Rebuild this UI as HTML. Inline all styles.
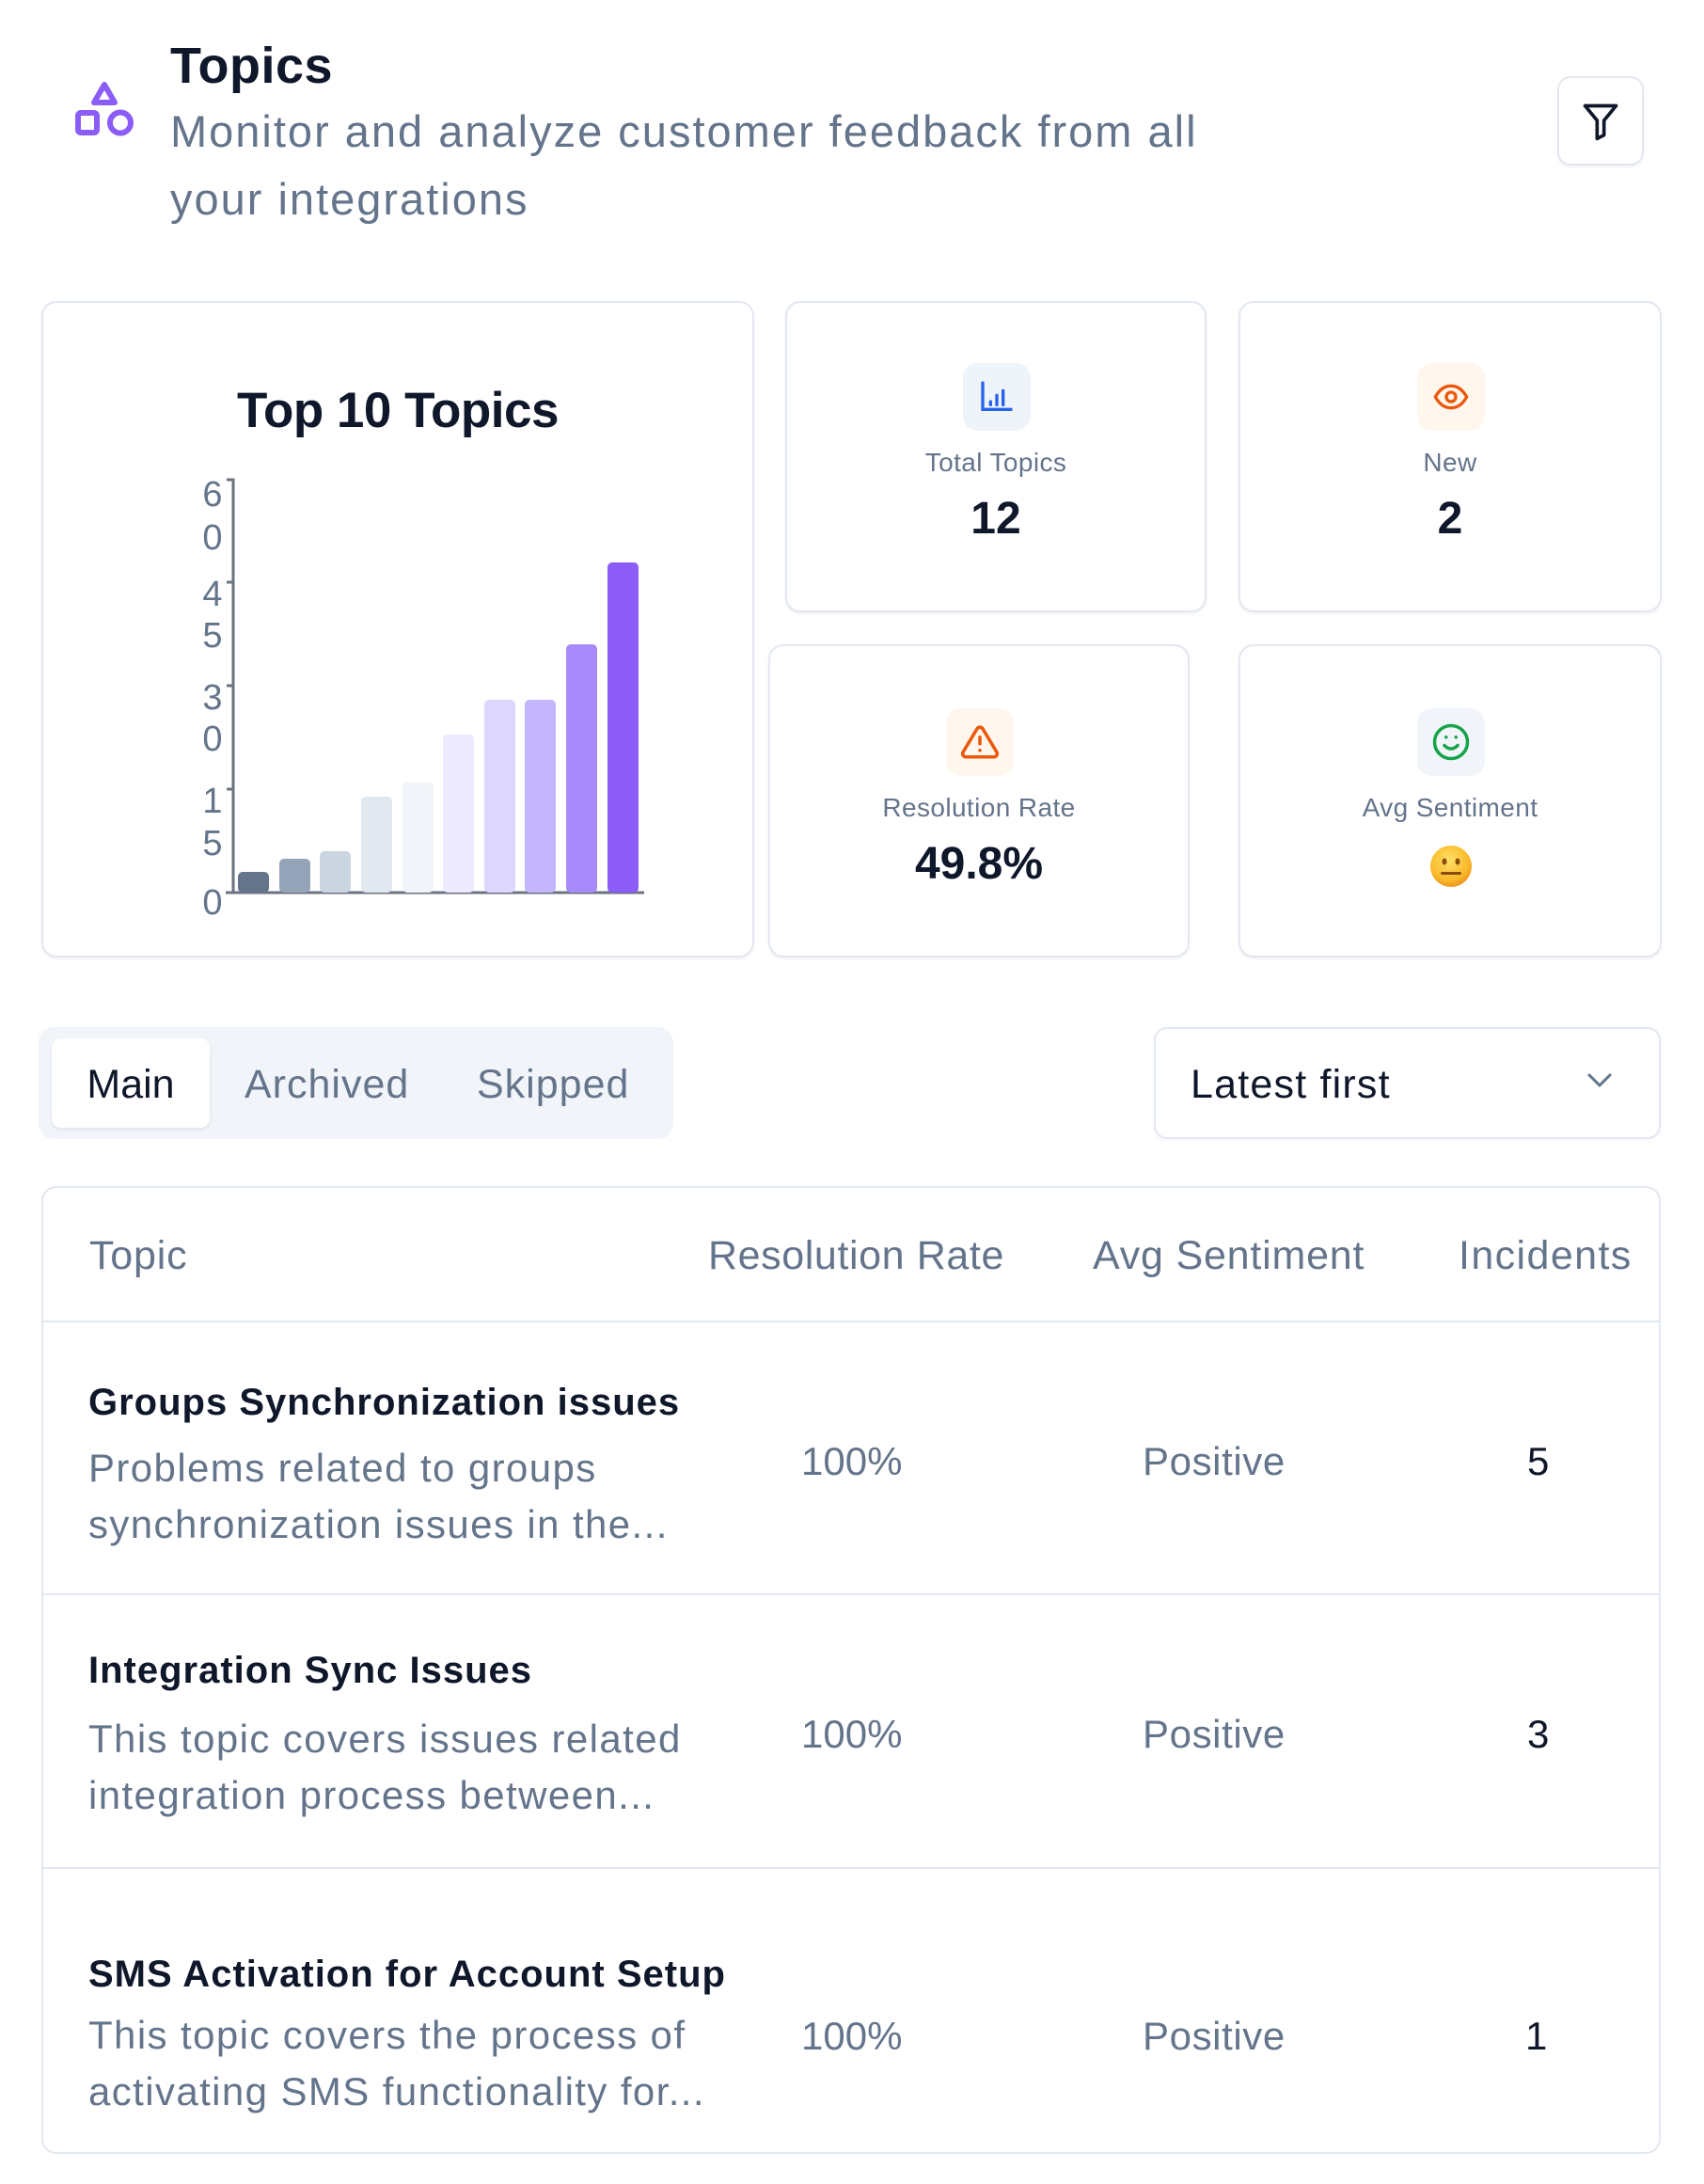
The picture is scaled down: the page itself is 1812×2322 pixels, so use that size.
<!DOCTYPE html>
<html><head><meta charset="utf-8"><style>
*{margin:0;padding:0;box-sizing:border-box}
body{width:1812px;height:2322px;background:#fff;position:relative;overflow:hidden;font-family:"Liberation Sans",sans-serif;color:#0f172a}
.a{position:absolute;white-space:nowrap}
.card{position:absolute;border:2px solid #e2e8f0;border-radius:16px;background:#fff;box-shadow:0 2px 3px rgba(15,23,42,.05)}
.ib{position:absolute;width:72px;height:72px;border-radius:16px;display:flex;align-items:center;justify-content:center}
.lbl{position:absolute;width:100%;text-align:center;font-size:28px;color:#64748b;letter-spacing:.4px}
.val{position:absolute;width:100%;text-align:center;font-size:48px;font-weight:bold;color:#0f172a}
.g{color:#64748b}
.hline{position:absolute;left:44px;width:1722px;height:2px;background:#e2e8f0}
.d{letter-spacing:1.4px}
.t{letter-spacing:1px}
</style></head><body>

<svg class="a" style="left:78px;top:84px" width="66" height="64" viewBox="0 0 66 64" fill="none" stroke="#8b5cf6" stroke-width="6" stroke-linejoin="round">
<path d="M33 6 L22 25 H44 Z"/>
<rect x="5" y="36" width="20" height="21" rx="3"/>
<circle cx="50" cy="46.5" r="11"/>
</svg>
<div class="a" style="left:181px;top:40px;font-size:54px;font-weight:bold;line-height:60px;letter-spacing:.5px">Topics</div>
<div class="a g" style="left:181px;top:104px;font-size:47px;line-height:72px;letter-spacing:2px">Monitor and analyze customer feedback from all<br>your integrations</div>

<div class="a" style="left:1656px;top:81px;width:92px;height:95px;border:2px solid #e2e8f0;border-radius:14px;box-shadow:0 2px 3px rgba(0,0,0,.05)"></div>
<svg class="a" style="left:1680px;top:106px" width="44" height="46" viewBox="0 0 24 24" fill="none" stroke="#0f172a" stroke-width="2" stroke-linejoin="round" stroke-linecap="round"><path d="M3 3h18l-7 8.5V20l-4 2v-10.5Z"/></svg>

<div class="card" style="left:44px;top:320px;width:758px;height:698px"></div>
<div class="a" style="left:44px;width:758px;text-align:center;top:405px;font-size:53px;font-weight:bold;line-height:64px;letter-spacing:-.5px">Top 10 Topics</div>
<svg class="a" style="left:200px;top:500px" width="500" height="490" viewBox="200 500 500 490">
<g fill="#64748b" font-family="Liberation Sans" font-size="38" text-anchor="middle">
<text x="226" y="538">6</text><text x="226" y="584">0</text>
<text x="226" y="644">4</text><text x="226" y="688">5</text>
<text x="226" y="754">3</text><text x="226" y="798">0</text>
<text x="226" y="864">1</text><text x="226" y="909">5</text>
<text x="226" y="972">0</text>
</g>
<g stroke="#6b7280" stroke-width="3" fill="none">
<path d="M241 510H248V949M241 619H248M241 729H248M241 839H248M240 949H685"/>
</g>
<g>
<rect x="253" y="927" width="33" height="22" rx="5" fill="#64748b"/>
<rect x="297" y="913" width="33" height="36" rx="5" fill="#94a3b8"/>
<rect x="340" y="905" width="33" height="44" rx="5" fill="#cbd5e1"/>
<rect x="384" y="847" width="33" height="102" rx="5" fill="#e2e8f0"/>
<rect x="428" y="832" width="33" height="117" rx="5" fill="#f1f5f9"/>
<rect x="471" y="781" width="33" height="168" rx="5" fill="#ede9fe"/>
<rect x="515" y="744" width="33" height="205" rx="5" fill="#ddd6fe"/>
<rect x="558" y="744" width="33" height="205" rx="5" fill="#c4b5fd"/>
<rect x="602" y="685" width="33" height="264" rx="5" fill="#a78bfa"/>
<rect x="646" y="598" width="33" height="351" rx="5" fill="#8b5cf6"/>
</g>
</svg>

<div class="card" style="left:835px;top:320px;width:448px;height:331px">
 <div class="ib" style="left:187px;top:64px;background:#eff4fa">
  <svg width="40" height="40" viewBox="0 0 24 24" fill="none" stroke="#2563eb" stroke-width="2" stroke-linecap="round"><path d="M3 3v17h18M8 15v2M12 11v6M16 8v9"/></svg></div>
 <div class="lbl" style="top:154px">Total Topics</div>
 <div class="val" style="top:202px">12</div>
</div>
<div class="card" style="left:1317px;top:320px;width:450px;height:331px">
 <div class="ib" style="left:188px;top:64px;background:#fff6ed">
  <svg width="40" height="40" viewBox="0 0 24 24" fill="none" stroke="#ea580c" stroke-width="2"><path d="M2 12c2.5-4.5 6-7 10-7s7.5 2.5 10 7c-2.5 4.5-6 7-10 7s-7.5-2.5-10-7Z"/><circle cx="12" cy="12" r="3"/></svg></div>
 <div class="lbl" style="top:154px">New</div>
 <div class="val" style="top:202px">2</div>
</div>
<div class="card" style="left:817px;top:685px;width:448px;height:333px">
 <div class="ib" style="left:187px;top:66px;background:#fff6ed">
  <svg width="42" height="42" viewBox="0 0 24 24" fill="none" stroke="#ea580c" stroke-width="2" stroke-linejoin="round" stroke-linecap="round"><path d="M10.3 3.9 1.8 18a2 2 0 0 0 1.7 3h17a2 2 0 0 0 1.7-3L13.7 3.9a2 2 0 0 0-3.4 0Z"/><path d="M12 9v4M12 17h.01"/></svg></div>
 <div class="lbl" style="top:156px">Resolution Rate</div>
 <div class="val" style="top:204px">49.8%</div>
</div>
<div class="card" style="left:1317px;top:685px;width:450px;height:333px">
 <div class="ib" style="left:188px;top:66px;background:#f1f5f9">
  <svg width="42" height="42" viewBox="0 0 24 24" fill="none" stroke="#16a34a" stroke-width="2" stroke-linecap="round"><circle cx="12" cy="12" r="10"/><path d="M8 14s1.5 2 4 2 4-2 4-2M9 9h.01M15 9h.01"/></svg></div>
 <div class="lbl" style="top:156px">Avg Sentiment</div>
 <svg class="a" style="left:201px;top:211px" width="46" height="46" viewBox="0 0 46 46"><defs><radialGradient id="e" cx=".45" cy=".35" r=".7"><stop offset="0" stop-color="#ffe066"/><stop offset=".7" stop-color="#f9b829"/><stop offset="1" stop-color="#ec8a1c"/></radialGradient></defs><circle cx="23" cy="23" r="22" fill="url(#e)"/><ellipse cx="16" cy="18" rx="2.5" ry="3.5" fill="#8a4a10"/><ellipse cx="30" cy="18" rx="2.5" ry="3.5" fill="#8a4a10"/><rect x="12" y="29" width="22" height="3" rx="1.5" fill="#8a4a10"/></svg>
</div>

<div class="a" style="left:41px;top:1092px;width:675px;height:119px;background:#f1f5f9;border-radius:16px"></div>
<div class="a" style="left:55px;top:1104px;width:168px;height:95px;background:#fff;border-radius:10px;box-shadow:0 2px 4px rgba(15,23,42,.08)"></div>
<div class="a" style="left:55px;width:168px;text-align:center;top:1128px;font-size:43px;line-height:50px">Main</div>
<div class="a g" style="left:260px;top:1128px;font-size:43px;line-height:50px;letter-spacing:1px">Archived</div>
<div class="a g" style="left:507px;top:1128px;font-size:43px;line-height:50px;letter-spacing:1px">Skipped</div>

<div class="a" style="left:1227px;top:1092px;width:539px;height:119px;border:2px solid #e2e8f0;border-radius:14px;box-shadow:0 2px 3px rgba(0,0,0,.04)"></div>
<div class="a" style="left:1266px;top:1128px;font-size:43px;line-height:50px;letter-spacing:1.2px">Latest first</div>
<svg class="a" style="left:1686px;top:1138px" width="30" height="20" viewBox="0 0 30 20" fill="none" stroke="#64748b" stroke-width="3" stroke-linecap="round" stroke-linejoin="round"><path d="M4 5l11 11L26 5"/></svg>

<div class="card" style="left:44px;top:1261px;width:1722px;height:1029px;box-shadow:none"></div>
<div class="hline" style="top:1404px"></div>
<div class="hline" style="top:1694px"></div>
<div class="hline" style="top:1985px"></div>
<div class="a g" style="left:95px;top:1310px;font-size:43px;line-height:50px;letter-spacing:.8px">Topic</div>
<div class="a g" style="left:753px;top:1310px;font-size:43px;line-height:50px;letter-spacing:.6px">Resolution Rate</div>
<div class="a g" style="left:1162px;top:1310px;font-size:43px;line-height:50px;letter-spacing:.8px">Avg Sentiment</div>
<div class="a g" style="left:1551px;top:1310px;font-size:43px;line-height:50px;letter-spacing:1.4px">Incidents</div>

<div class="a t" style="left:94px;top:1468px;font-size:40px;font-weight:bold;line-height:46px">Groups Synchronization issues</div>
<div class="a g d" style="left:94px;top:1531px;font-size:42px;line-height:60px">Problems related to groups<br>synchronization issues in the...</div>
<div class="a g" style="left:852px;top:1529px;font-size:42px;line-height:50px">100%</div>
<div class="a g" style="left:1215px;top:1529px;font-size:42px;line-height:50px;letter-spacing:.6px">Positive</div>
<div class="a" style="left:1624px;top:1529px;font-size:42px;line-height:50px">5</div>

<div class="a t" style="left:94px;top:1753px;font-size:40px;font-weight:bold;line-height:46px">Integration Sync Issues</div>
<div class="a g d" style="left:94px;top:1819px;font-size:42px;line-height:60px">This topic covers issues related<br>integration process between...</div>
<div class="a g" style="left:852px;top:1819px;font-size:42px;line-height:50px">100%</div>
<div class="a g" style="left:1215px;top:1819px;font-size:42px;line-height:50px;letter-spacing:.6px">Positive</div>
<div class="a" style="left:1624px;top:1819px;font-size:42px;line-height:50px">3</div>

<div class="a t" style="left:94px;top:2076px;font-size:40px;font-weight:bold;line-height:46px">SMS Activation for Account Setup</div>
<div class="a g d" style="left:94px;top:2134px;font-size:42px;line-height:60px">This topic covers the process of<br>activating SMS functionality for...</div>
<div class="a g" style="left:852px;top:2140px;font-size:42px;line-height:50px">100%</div>
<div class="a g" style="left:1215px;top:2140px;font-size:42px;line-height:50px;letter-spacing:.6px">Positive</div>
<div class="a" style="left:1622px;top:2140px;font-size:42px;line-height:50px">1</div>
</body></html>
